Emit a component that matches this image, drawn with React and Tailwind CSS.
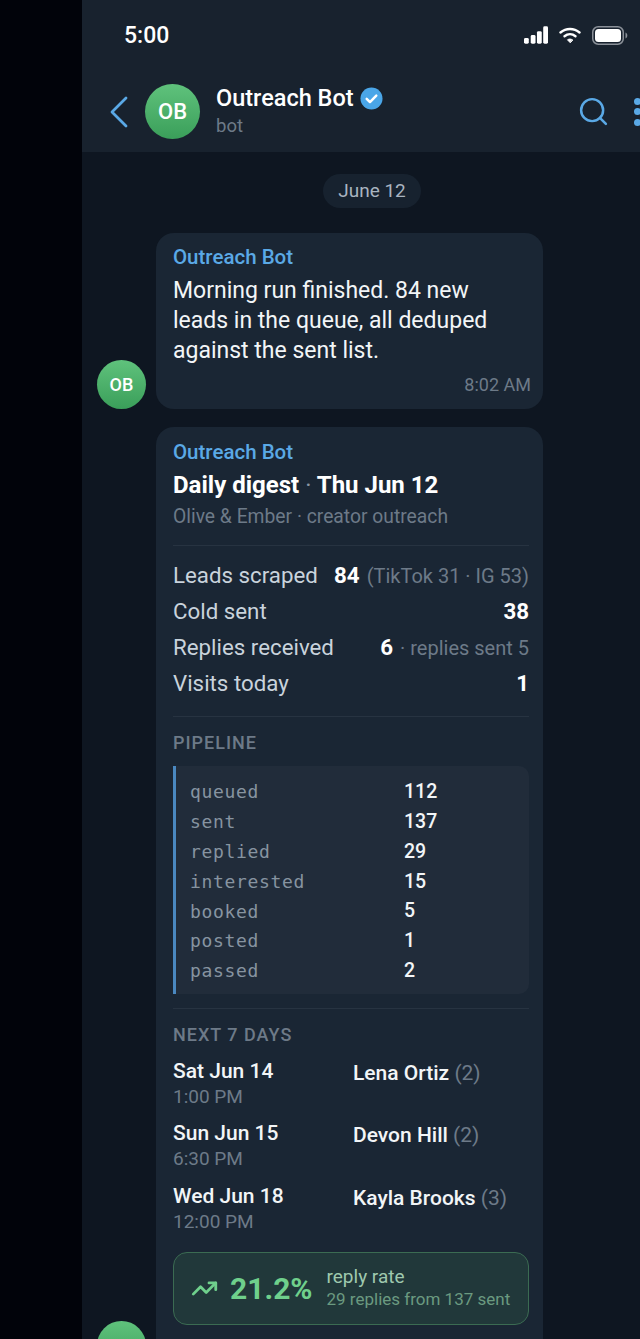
import { Search, TrendingUp } from 'lucide-react';

const stats = [
  { label: 'Leads scraped', value: '84', note: '(TikTok 31 · IG 53)' },
  { label: 'Cold sent', value: '38' },
  { label: 'Replies received', value: '6', note: '· replies sent 5' },
  { label: 'Visits today', value: '1' },
];

const pipeline = [
  ['queued', '112'],
  ['sent', '137'],
  ['replied', '29'],
  ['interested', '15'],
  ['booked', '5'],
  ['posted', '1'],
  ['passed', '2'],
];

const visits = [
  { date: 'Sat Jun 14', time: '1:00 PM', name: 'Lena Ortiz', count: '(2)' },
  { date: 'Sun Jun 15', time: '6:30 PM', name: 'Devon Hill', count: '(2)' },
  { date: 'Wed Jun 18', time: '12:00 PM', name: 'Kayla Brooks', count: '(3)' },
];

function Avatar({ className }) {
  return (
    <div className={`flex shrink-0 items-center justify-center rounded-full bg-gradient-to-b from-[#5fc27c] to-[#3a9f5a] font-medium text-white ${className}`}>
      OB
    </div>
  );
}

function StatusIcons() {
  return (
    <div className="flex items-center gap-[11px]">
      <svg width="24" height="18" viewBox="0 0 25 18" fill="#fff">
        <rect x="0" y="12" width="5" height="6" rx="1.5" />
        <rect x="7" y="9" width="5" height="9" rx="1.5" />
        <rect x="13.5" y="5" width="5" height="13" rx="1.5" />
        <rect x="20" y="0" width="5" height="18" rx="1.5" />
      </svg>
      <svg width="22" height="17" viewBox="0 0 22 17" fill="none" stroke="#fff" strokeWidth="2.4" strokeLinecap="round">
        <path d="M1.5 5.5C7 .8 15 .8 20.5 5.5" />
        <path d="M5.5 9.2c3.3-2.7 7.7-2.7 11 0" />
        <path d="M11 15.5 8.5 12.8c1.5-1 3.5-1 5 0z" fill="#fff" strokeWidth="1" strokeLinejoin="round" />
      </svg>
      <svg width="36" height="19" viewBox="0 0 36 19" fill="none">
        <rect x="0.75" y="0.75" width="30.5" height="17.5" rx="5.5" stroke="#8a9098" strokeWidth="1.5" />
        <rect x="3" y="3" width="26" height="13" rx="3.5" fill="#fff" />
        <path d="M33.5 6.5c1.3.5 1.8 1.7 1.8 3s-.5 2.5-1.8 3z" fill="#8a9098" />
      </svg>
    </div>
  );
}

function Verified() {
  return (
    <svg width="23" height="23" viewBox="0 0 24 24" className="shrink-0">
      <circle cx="12" cy="12" r="11.5" fill="#4aa6e8" />
      <path d="M7 12.3l3.4 3.4L17 9" fill="none" stroke="#fff" strokeWidth="2.6" strokeLinecap="round" strokeLinejoin="round" />
    </svg>
  );
}

export default function App() {
  return (
    <div className="flex h-[1339px] w-[640px] overflow-hidden bg-[#01030a] font-['Roboto',sans-serif]">
      <div className="w-[82px] shrink-0" />

      {/* phone runs past the right edge of the shot */}
      <div className="w-[580px] shrink-0 bg-[#0e1621]">
        {/* Header */}
        <header className="h-[152px] bg-[#18222e]">
          <div className="flex h-[70px] items-center justify-between pl-[42px] pr-[34px]">
            <span className="pt-[3px] text-[23px] font-medium text-white">5:00</span>
            <StatusIcons />
          </div>
          <div className="mt-[14px] flex h-[55px] items-center">
            <svg width="18" height="32" viewBox="0 0 18 32" fill="none" className="ml-[28px] shrink-0" stroke="#5aa9e6" strokeWidth="2.8" strokeLinecap="round" strokeLinejoin="round">
              <path d="M16 2 2 16l14 14" />
            </svg>
            <Avatar className="ml-[17px] h-[55px] w-[55px] text-[22px]" />
            <div className="ml-[16px] flex-1">
              <div className="flex items-center gap-[6px] leading-[28px]">
                <span className="text-[23.5px] font-medium text-white">Outreach Bot</span>
                <Verified />
              </div>
              <div className="pt-[1px] text-[18.5px] leading-[26px] text-[#6d7a88]">bot</div>
            </div>
            <Search className="mr-[24px] h-[33px] w-[33px] shrink-0 text-[#5aa9e6]" strokeWidth={1.8} />
            <div className="mr-[21px] flex shrink-0 flex-col gap-[3.5px]">
              <span className="h-[7px] w-[7px] rounded-full bg-[#5aa9e6]" />
              <span className="h-[7px] w-[7px] rounded-full bg-[#5aa9e6]" />
              <span className="h-[7px] w-[7px] rounded-full bg-[#5aa9e6]" />
            </div>
          </div>
        </header>

        {/* Messages */}
        <div className="pt-[22px]">
          <div className="flex justify-center">
            <span className="flex h-[34px] items-center rounded-full bg-[#17222f] px-[15px] pt-[1px] text-[19px] text-[#a9b4c0]">June 12</span>
          </div>

          <div className="mt-[25px] flex items-end pl-[15px]">
            <Avatar className="h-[49px] w-[49px] text-[18px]" />
            <div className="ml-[10px] w-[387px] rounded-[18px] bg-[#1a2634] pb-[13px] pl-[17px] pr-[12px] pt-[11px]">
              <div className="text-[20.5px] font-medium leading-[26px] text-[#5aa9e6]">Outreach Bot</div>
              <p className="mt-[6px] w-[340px] text-[23px] leading-[30px] text-[#f2f5f7]">
                Morning run finished. 84 new leads in the queue, all deduped against the sent list.
              </p>
              <div className="mt-[8px] text-right text-[18px] leading-[22px] text-[#6d7a88]">8:02 AM</div>
            </div>
          </div>

          <div className="mt-[18px] flex items-end pl-[15px]">
            <Avatar className="h-[49px] w-[49px] text-[18px]" />
            <div className="ml-[10px] h-[943px] w-[387px] rounded-[18px] bg-[#1a2634] pl-[17px] pr-[14px] pt-[12px]">
              <div className="text-[20.5px] font-medium leading-[26px] text-[#5aa9e6]">Outreach Bot</div>
              <div className="mt-[5px] text-[24px] font-bold leading-[30px] text-white">
                Daily digest <span className="font-normal text-[#8a96a3]">·</span> Thu Jun 12
              </div>
              <div className="mt-[3px] text-[19.3px] leading-[28px] text-[#6d7a88]">Olive &amp; Ember · creator outreach</div>

              <div className="mt-[14px] border-t border-[#273341] pt-[12px]">
                {stats.map((s) => (
                  <div key={s.label} className="flex h-[36px] items-center text-[22.3px]">
                    <span className="text-[#c9d3dc]">{s.label}</span>
                    <span className="ml-auto flex items-baseline gap-[7px]">
                      <span className="font-bold text-white">{s.value}</span>
                      {s.note && <span className="text-[20px] text-[#6d7a88]">{s.note}</span>}
                    </span>
                  </div>
                ))}
              </div>

              <div className="mt-[14px] border-t border-[#273341] pt-[13px]">
                <div className="text-[18px] font-medium leading-[26px] tracking-[1px] text-[#6d7a88]">PIPELINE</div>
                <div className="mt-[10px] rounded-r-[10px] border-l-[3px] border-[#4a88c0] bg-[#212c3a] pb-[8px] pl-[14px] pt-[11px]">
                  {pipeline.map(([label, value]) => (
                    <div key={label} className="flex h-[29.8px] items-center">
                      <span className="w-[214px] font-['DejaVu_Sans_Mono',monospace] text-[18px] tracking-[0.66px] text-[#8794a1]">{label}</span>
                      <span className="text-[19.5px] font-medium text-[#f2f5f7]">{value}</span>
                    </div>
                  ))}
                </div>
              </div>

              <div className="mt-[14px] border-t border-[#273341] pt-[13px]">
                <div className="text-[18px] font-medium leading-[26px] tracking-[1px] text-[#6d7a88]">NEXT 7 DAYS</div>
                <div className="mt-[10px]">
                  {visits.map((v) => (
                    <div key={v.date} className="flex h-[62.5px]">
                      <div className="w-[180px]">
                        <div className="text-[21px] font-medium leading-[26px] text-[#f2f5f7]">{v.date}</div>
                        <div className="text-[19px] leading-[26px] text-[#6d7a88]">{v.time}</div>
                      </div>
                      <div className="pt-[2px] text-[21px] font-medium leading-[26px] text-[#f2f5f7]">
                        {v.name} <span className="font-normal text-[#6d7a88]">{v.count}</span>
                      </div>
                    </div>
                  ))}
                </div>
              </div>

              <div className="mt-[7px] flex h-[73px] items-center rounded-[14px] border border-[#3b6b52] bg-[#21383a] pl-[17px]">
                <TrendingUp className="h-[27px] w-[27px] shrink-0 text-[#6fd08c]" strokeWidth={2.5} />
                <span className="ml-[12px] text-[30px] font-bold text-[#6fd08c]">21.2%</span>
                <div className="ml-[14px] pb-[2px]">
                  <div className="text-[19px] leading-[23px] text-[#9fc9ae]">reply rate</div>
                  <div className="text-[17px] leading-[22px] text-[#6b9a80]">29 replies from 137 sent</div>
                </div>
              </div>
            </div>
          </div>
        </div>
      </div>
    </div>
  );
}
